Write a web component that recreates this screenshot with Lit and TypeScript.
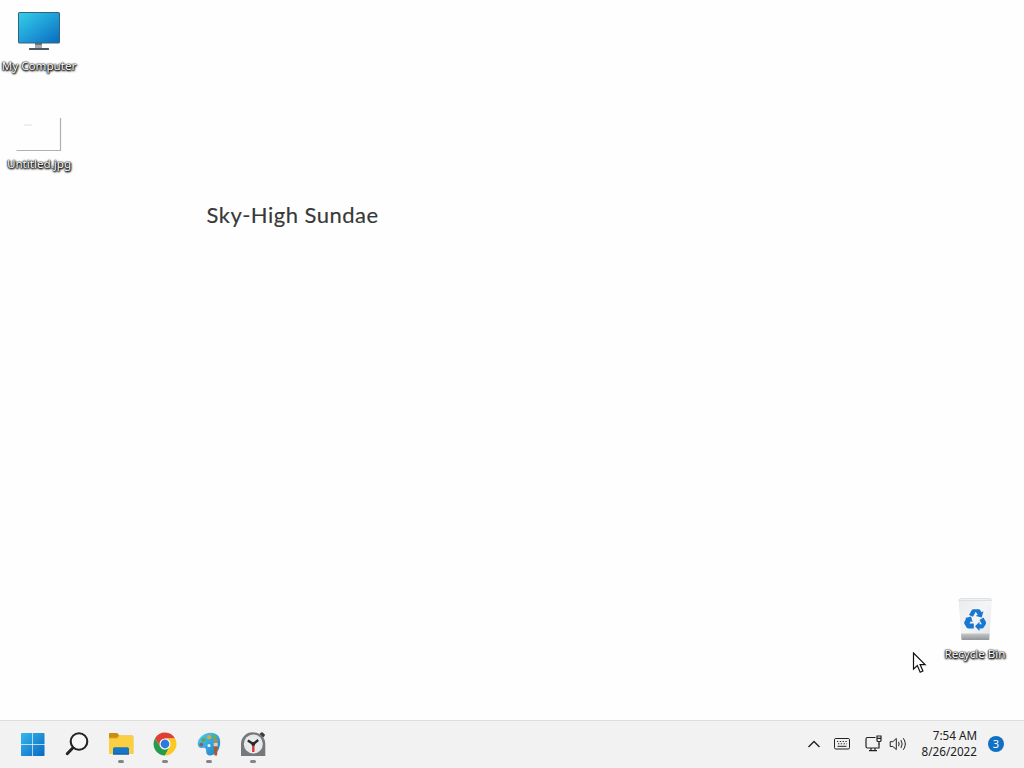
import { LitElement, html, svg, css } from 'lit';
import { customElement, property } from 'lit/decorators.js';

const computer = svg`
  <defs>
    <linearGradient id="screen" x1="0" y1="0" x2="1" y2="1">
      <stop offset="0" stop-color="#34cde6"></stop>
      <stop offset="0.5" stop-color="#1f9ed8"></stop>
      <stop offset="1" stop-color="#0a6cbd"></stop>
    </linearGradient>
  </defs>
  <path d="M20 34h7v5h-7z" fill="#a4a9ad"></path>
  <path d="M20 34h7v2h-7z" fill="#6f7880"></path>
  <rect x="14" y="39" width="20" height="2" rx="0.5" fill="#505962"></rect>
  <rect x="3" y="3" width="42" height="31.500" rx="1.500" fill="#32647f"></rect>
  <rect x="4" y="4" width="40" height="29.500" rx="0.500" fill="url(#screen)"></rect>`;

const picture = svg`
  <rect x="1" y="10" width="45" height="34" fill="#fefefe"></rect>
  <path d="M9 18h8" stroke="#dfdfdf"></path>
  <path d="M1.500 43.500H45.500V11" fill="none" stroke="#b0b0b0" stroke-width="1.200"></path>`;

const bin = svg`
  <defs>
    <linearGradient id="glass" x1="0" y1="0" x2="1" y2="1">
      <stop offset="0" stop-color="#e9ebec"></stop>
      <stop offset="0.5" stop-color="#f4f5f6"></stop>
      <stop offset="1" stop-color="#dfe2e4"></stop>
    </linearGradient>
    <linearGradient id="base" x1="0" y1="0" x2="0" y2="1">
      <stop offset="0" stop-color="#c5c8ca"></stop>
      <stop offset="1" stop-color="#919597"></stop>
    </linearGradient>
  </defs>
  <path d="M7.500 2h33.500l-2.800 40.500H10.500z" fill="url(#glass)"></path>
  <path d="M10 36.500h28.600l-.4 6.500H10.500z" fill="url(#base)"></path>
  <path d="M8 3.500L9.500 1.500h30l1.200 2z" fill="#f0f1f2" stroke="#d9dbdc" stroke-width="0.800"></path>
  <g fill="#1878d0" transform="translate(1.500 .5)">
    <path d="M16.500 17.500l2.500-4.500q.7-1.200 2-1.200h5q1.300 0 2 1.200l1 1.800 2-1-1.800 6.200-6-1.500 2-1.200-2-3-2.700 5z"></path>
    <path d="M27 22.500l4-2.500 2.200 4q.8 1.400 0 2.700l-2 3.300q-.7 1.100-2 1.100H27v2.400l-4.500-4.700 4.500-4.500v2.500h2.300z"></path>
    <path d="M12.800 20.500l5.700-1.500 1.700 5.800-2-1-1.200 2.300h4.300V31H16q-1.300 0-2-1.100l-2-3.300q-.8-1.200 0-2.600l1.500-2.500z"></path>
  </g>`;

const start = svg`
  <defs>
    <linearGradient id="win" x1="0" y1="0" x2="24" y2="24" gradientUnits="userSpaceOnUse">
      <stop offset="0" stop-color="#38b9ed"></stop>
      <stop offset="1" stop-color="#0668c3"></stop>
    </linearGradient>
  </defs>
  <path fill="url(#win)" d="M0 1.800q0-.8.8-.8h10.500v11H0zM12 1h10.700q.8 0 .8.800V12H12zM0 12.800h11.300V24H.8q-.8 0-.8-.8zM12 12.800h11.500v10.400q0 .8-.8.800H12z"></path>`;

const search = svg`
  <circle cx="14" cy="9.500" r="8.300" fill="#f8f8f8" stroke="#242424" stroke-width="2.100"></circle>
  <path d="M8 15.700L2.200 21.700" stroke="#242424" stroke-width="2.900" stroke-linecap="round"></path>`;

const explorer = svg`
  <path d="M0 2.300Q0 1 1.300 1H8l2.500 2.500H23q1.300 0 1.300 1.300V22H1.300Q0 22 0 20.700z" fill="#e2a61c"></path>
  <path d="M0 6.500h8.200l2.300-2.700H23q1.300 0 1.300 1.300v15.600q0 1.300-1.300 1.300H1.300Q0 22 0 20.700z" fill="#fbcf42"></path>
  <path d="M0 2.300Q0 1 1.300 1H8l1.800 2-2.300 2.500H0z" fill="#c98d13"></path>
  <path d="M4 22.500v-5.800q0-1.500 1.500-1.500h13q1.500 0 1.500 1.500v5.800z" fill="#1877c5"></path>
  <path d="M4 21.500h16v1H4z" fill="#0a5a9e"></path>`;

const chrome = svg`
  <path d="M12 6.500H22.100A11.500 11.500 0 0 0 2.050 6.250L7.250 14.750z" fill="#de4034"></path>
  <path d="M2.050 6.250L7.250 14.750 12 17.500l4.760-2.750L12 23.500A11.500 11.500 0 0 1 2.050 6.250z" fill="#269c4a"></path>
  <path d="M12 6.500h10.100A11.500 11.500 0 0 1 12 23.500l4.760-8.750z" fill="#fbc91f"></path>
  <circle cx="12" cy="12" r="5.500" fill="#fff"></circle>
  <circle cx="12" cy="12" r="4.400" fill="#2f78df"></circle>`;

const paint = svg`
  <defs>
    <linearGradient id="palette" x1="0" y1="0" x2="1" y2="1">
      <stop offset="0" stop-color="#55cdec"></stop>
      <stop offset="1" stop-color="#1a7ec8"></stop>
    </linearGradient>
  </defs>
  <path d="M14 .8C6 .8.500 7 .700 12c.1 3.500 2.500 4.500 5 3.800 2.200-.6 3.500.5 3.400 2.700-.1 3.500 1.400 5.200 4.400 5C19.500 22.900 23.200 17 23.200 10 23.200 4.500 19.500.800 14 .8z" fill="url(#palette)"></path>
  <circle cx="12.200" cy="5.200" r="2.100" fill="#d9ad35"></circle>
  <circle cx="6.500" cy="8" r="2.100" fill="#58ac48"></circle>
  <circle cx="17.500" cy="5" r="2" fill="#61b74e"></circle>
  <circle cx="4.300" cy="12.600" r="1.900" fill="#8f5a70"></circle>
  <circle cx="12" cy="13.500" r="1.500" fill="#e9f7fc"></circle>
  <path d="M16.700 14h4l-.6 9.500h-2.700z" fill="#a95a35"></path>
  <path d="M16.700 10.800h4v3.500h-4z" fill="#d5d1c9"></path>
  <path d="M16.700 11q-.2-3 2-5 2.200 2 2 5z" fill="#b98a48"></path>`;

const clock = svg`
  <path d="M18.500 2l1.600-1.500q1-.7 1.900.2l1.500 1.600q.8.900 0 1.800L22 5.700z" fill="#3a3d40"></path>
  <path d="M0 24V11.500A11.500 11.500 0 0 1 11.700.300q3.500 0 6.300 1.500L21.500 4.500q2.800 3.200 2.800 7V24z" fill="#75797c"></path>
  <circle cx="12.300" cy="12" r="9.500" fill="#e9eaeb"></circle>
  <circle cx="12.300" cy="12" r="7.900" fill="none" stroke="#d6d8da" stroke-width="0.900" stroke-dasharray="1 3.140"></circle>
  <path d="M12.300 12v8" stroke="#d33a32" stroke-width="2.400"></path>
  <path d="M6.800 8.500l5.500 3.500 4.900-4" fill="none" stroke="#27292b" stroke-width="2.400"></path>
  <circle cx="12.300" cy="12" r="1.900" fill="#27292b"></circle>`;

@customElement('desktop-item')
class DesktopItem extends LitElement {
  @property() label = '';
  @property({ attribute: false }) icon: unknown;

  static styles = css`
    :host {
      display: flex;
      flex-direction: column;
      align-items: center;
      width: 78px;
    }

    .icon {
      width: 48px;
      height: 48px;
    }

    .label {
      margin-top: 1px;
      font: 11.6px/16px 'Noto Sans', sans-serif;
      color: #fff;
      white-space: nowrap;
      text-shadow: 0 0 2px #000, 0 1px 2px #000, 1px 1px 2px #000, 0 0 1px #000;
    }
  `;

  render() {
    return html`
      <svg class="icon" viewBox="0 0 48 48">${this.icon}</svg>
      <div class="label">${this.label}</div>
    `;
  }
}

@customElement('task-button')
class TaskButton extends LitElement {
  @property({ type: Boolean }) running = false;
  @property({ attribute: false }) icon: unknown;

  static styles = css`
    :host {
      display: flex;
      flex-direction: column;
      align-items: center;
      width: 44px;
      padding-top: 11px;
      box-sizing: border-box;
    }

    .icon {
      width: 24px;
      height: 24px;
      overflow: visible;
    }

    .dot {
      width: 6px;
      height: 3px;
      margin-top: 4px;
      border-radius: 2px;
      background: #858585;
    }
  `;

  render() {
    return html`
      <svg class="icon" viewBox="0 0 24 24">${this.icon}</svg>
      ${this.running ? html`<div class="dot"></div>` : ''}
    `;
  }
}

@customElement('app-root')
class AppRoot extends LitElement {
  static styles = css`
    :host {
      display: flex;
      flex-direction: column;
      position: relative;
      width: 1024px;
      height: 768px;
      overflow: hidden;
      background: #fefefe;
      font-family: 'Noto Sans', sans-serif;
    }

    .desktop {
      position: relative;
      flex: 1;
    }

    .computer {
      position: absolute;
      left: 0;
      top: 9px;
    }

    .file {
      position: absolute;
      left: 0;
      top: 107px;
    }

    .bin {
      position: absolute;
      left: 936px;
      top: 597px;
    }

    .title {
      position: absolute;
      left: 206.5px;
      top: 200px;
      font: 22px/29px Lato, sans-serif;
      letter-spacing: 0.48px;
      color: #383838;
      -webkit-text-stroke: 0.15px #383838;
      white-space: nowrap;
    }

    .cursor {
      position: absolute;
      left: 912px;
      top: 652px;
      width: 16px;
      height: 23px;
    }

    .taskbar {
      display: flex;
      justify-content: space-between;
      box-sizing: border-box;
      height: 48px;
      background: #f2f2f2;
      border-top: 1px solid #dedede;
    }

    .apps {
      display: flex;
      padding-left: 10.6px;
    }

    .tray {
      display: flex;
      align-items: center;
      padding: 0 20px 1.5px 0;
      color: #202020;
    }

    .tray svg {
      fill: none;
      stroke: #222;
    }

    .chevron {
      margin-right: 14px;
    }

    .keyboard {
      margin-right: 15px;
    }

    .network {
      margin-right: 7px;
    }

    .sound {
      margin-right: 13px;
    }

    .clock {
      width: 58px;
      margin-right: 11px;
      padding-bottom: 1px;
      font-size: 11.7px;
      line-height: 16px;
      text-align: right;
      white-space: nowrap;
    }

    .badge {
      width: 16px;
      height: 16px;
      border-radius: 50%;
      background: #0f70c4;
      color: #fff;
      font-size: 11px;
      line-height: 16px;
      text-align: center;
    }
  `;

  render() {
    return html`
      <div class="desktop">
        <desktop-item class="computer" label="My Computer" .icon=${computer}></desktop-item>
        <desktop-item class="file" label="Untitled.jpg" .icon=${picture}></desktop-item>
        <div class="title">Sky-High Sundae</div>
        <desktop-item class="bin" label="Recycle Bin" .icon=${bin}></desktop-item>
        <svg class="cursor" viewBox="0 0 16 23">
          <path d="M1.500 1v16.200l3.800-3.600 2.900 6.600 2.700-1.200-2.800-6.400h5z" fill="#fff" stroke="#111" stroke-width="1.200"></path>
        </svg>
      </div>
      <div class="taskbar">
        <div class="apps">
          <task-button .icon=${start}></task-button>
          <task-button .icon=${search}></task-button>
          <task-button running .icon=${explorer}></task-button>
          <task-button running .icon=${chrome}></task-button>
          <task-button running .icon=${paint}></task-button>
          <task-button running .icon=${clock}></task-button>
        </div>
        <div class="tray">
          <svg class="chevron" width="12" height="8" viewBox="0 0 12 8">
            <path d="M.5 7L6 1.500 11.500 7" stroke-width="1.400"></path>
          </svg>
          <svg class="keyboard" width="16" height="12" viewBox="0 0 16 12">
            <rect x="0.500" y="0.500" width="15" height="10.500" rx="1.300"></rect>
            <path d="M3 3.500h10.500M4 5.800h9" stroke-dasharray="1.300 1.500"></path>
            <path d="M3.500 8.300h9"></path>
          </svg>
          <svg class="network" width="17" height="17" viewBox="0 0 17 17">
            <path d="M10.500 2.500h-8q-1.500 0-1.500 1.500v7.500q0 1.500 1.500 1.500h11.500v-4.500M6 13v2.500M10 13v2.500M4 15.700h8" stroke-width="1.200"></path>
            <path d="M12 1h4v4.500q0 1-1 1h-2q-1 0-1-1zM12 3.300h4M14 6.500v3" stroke-width="1.200"></path>
          </svg>
          <svg class="sound" width="17" height="14" viewBox="0 0 17 14">
            <path d="M1.200 4.700h2.600L7.300 1.500v11L3.800 9.500H1.200z"></path>
            <path d="M9.500 4.800q1.400 2.200 0 4.400M11.900 3q2.600 4 0 8M14.300 1.200q4 5.800 0 11.600"></path>
          </svg>
          <div class="clock">
            <div>7:54 AM</div>
            <div>8/26/2022</div>
          </div>
          <div class="badge">3</div>
        </div>
      </div>
    `;
  }
}
